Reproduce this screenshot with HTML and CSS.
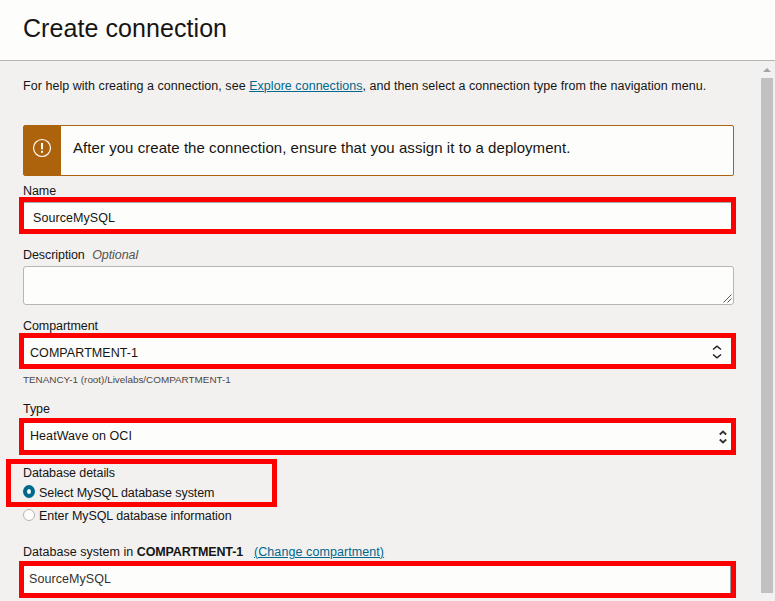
FILE: index.html
```html
<!DOCTYPE html>
<html lang="en">
<head>
<meta charset="utf-8">
<title>Create connection</title>
<link rel="stylesheet" href="styles.css">
</head>
<body>
<div class="panel">
  <header class="header"><h1 class="title"><span>Create connection</span></h1></header>
  <div class="body">
    <main class="form">
      <p class="help">For help with creating a connection, see <a href="#">Explore connections</a>, and then select a connection type from the navigation menu.</p>
      <div class="alert">
        <div class="alert-icon">
          <svg width="20" height="20" viewBox="0 0 20 20"><circle cx="10" cy="10" r="8.5" fill="none" stroke="#fff" stroke-width="1.2"/><path d="M10 5v6.3M10 12.8v2" stroke="#fff" stroke-width="2"/></svg>
        </div>
        <div class="alert-text">After you create the connection, ensure that you assign it to a deployment.</div>
      </div>
      <label class="label label-name">Name</label>
      <div class="field marked field-name"><span>SourceMySQL</span></div>
      <label class="label label-description">Description <em class="optional">Optional</em></label>
      <div class="textarea">
        <svg width="9" height="9" viewBox="0 0 9 9"><path d="M.5 8.5l8-8M4.5 8.5l4-4" fill="none" stroke="#555" stroke-width="1"/></svg>
      </div>
      <label class="label label-compartment">Compartment</label>
      <div class="field marked field-compartment"><span>COMPARTMENT-1</span>
        <svg class="chevrons" width="10" height="14" viewBox="0 0 10 14"><path d="M1 4.5l4-3.3 4 3.3M1 9.5l4 3.3 4-3.3" fill="none" stroke="#222" stroke-width="1.5"/></svg>
      </div>
      <p class="path">TENANCY-1 (root)/Livelabs/COMPARTMENT-1</p>
      <label class="label label-type">Type</label>
      <div class="field marked field-type"><span>HeatWave on OCI</span>
        <svg class="chevrons" width="8" height="14" viewBox="0 0 8 14"><path d="M.8 4.5L4 1.6l3.2 2.9M.8 9.5L4 12.4l3.2-2.9" fill="none" stroke="#333" stroke-width="1.9"/></svg>
      </div>
      <div class="details marked">
        <div class="label label-details">Database details</div>
        <div class="option"><i class="radio radio-on"></i><span class="option-select">Select MySQL database system</span></div>
      </div>
      <div class="option option-off"><i class="radio"></i><span class="option-enter">Enter MySQL database information</span></div>
      <div class="label label-system"><span class="system-in">Database system in <b>COMPARTMENT-1</b></span><a href="#">(Change compartment)</a></div>
      <div class="field marked field-system"><span>SourceMySQL</span></div>
    </main>
    <div class="scrollbar"><div class="arrow"></div><div class="thumb"></div></div>
  </div>
</div>
</body>
</html>
```
FILE: styles.css
```css
* { box-sizing: border-box; }
body { margin: 0; background: #f3f1f0; color: #161513; font: 12.5px/14px "Liberation Sans", Arial, sans-serif; overflow: hidden; }
p, h1 { margin: 0; }
a { color: #00688c; text-decoration: underline; text-underline-offset: 1px; text-decoration-thickness: 1px; }
svg { display: block; flex: none; }
.panel { display: flex; flex-direction: column; height: 601px; }
.header { height: 61px; flex: none; background: #fdfdfb; border-bottom: 1px solid #b9b5b1; padding: 13px 23px; }
.title { font-size: 25px; line-height: 31px; font-weight: 400; letter-spacing: .07px; }
.body { display: flex; flex: 1; min-height: 0; justify-content: space-between; }
.form { width: 736px; padding-left: 19px; display: flex; flex-direction: column; white-space: nowrap; }
.form > * { flex: none; }
.help { margin: 18px 0 32px 4px; height: 14px; letter-spacing: .042px; }
.alert { display: flex; height: 51px; margin: 0 2px 0 4px; background: #fdfdfb; border: 1px solid #ac630c; border-radius: 2px; }
.alert-icon { width: 37px; background: #ac630c; padding: 12px 0 0 8px; }
.alert-text { padding: 13px 0 0 12px; font-size: 15px; line-height: 17px; letter-spacing: .05px; }
.label { display: block; height: 14px; line-height: 16px; margin-left: 4px; letter-spacing: -.07px; }
.label-name { margin-top: 7px; }
.marked { border: 5px solid #f00; }
.field { display: flex; align-items: center; background: #fdfdfb; height: 37px; letter-spacing: .07px; }
.field-name { padding: 5px 0 0 9px; box-shadow: inset 0 1px #aaa; }
.label-description { margin-top: 13px; }
.optional { margin-left: 4px; color: #55514e; }
.textarea { height: 39px; margin: 5px 2px 0 4px; background: #fdfdfb; border: 1px solid #b9b5b1; border-radius: 3px; display: flex; align-items: flex-end; justify-content: flex-end; padding: 1px; }
.label-compartment { margin-top: 13px; }
.field-compartment { height: 36px; margin-top: 1px; padding: 4px 9px 0 6px; }
.field-compartment .chevrons { margin-top: -2px; }
.chevrons { margin-left: auto; }
.path { margin: 4px 0 0 4px; height: 14px; font-size: 9.9px; color: #4a4643; }
.label-type { margin-top: 14px; }
.field-type { margin-top: 3px; padding: 0 4px 2px 6px; }
.field-type .chevrons { margin-top: 2px; }
.details { width: 271px; height: 48px; margin: 4px 0 0 -13px; padding: 1px 0 0 12px; }
.label-details { margin-left: 0; }
.option { display: flex; align-items: flex-start; height: 14px; line-height: 16px; margin-top: 6px; letter-spacing: -.07px; }
.radio { width: 12px; height: 12px; border: 1px solid #b9b5b1; border-radius: 50%; background: #fdfdfb; margin-right: 4px; flex: none; }
.radio-on { height: 13px; border: 4px solid #00688c; }
.option-off { margin: 2px 0 0 4px; line-height: 14px; }
.label-system { display: flex; margin-top: 21px; letter-spacing: .03px; }
.label-system b { letter-spacing: -.15px; }
.label-system a { letter-spacing: .08px; }
.system-in { margin-right: 11px; }
.field-system { margin-top: 3px; padding: 0 0 2px 5px; color: #333; box-shadow: inset -1px 0 #999; }
.scrollbar { width: 16px; background: #f1f1f1; display: flex; flex-direction: column; align-items: center; padding-top: 7px; }
.arrow { border: 4px solid transparent; border-top-width: 0; border-bottom: 4px solid #a3a3a3; }
.thumb { width: 12px; height: 515px; margin-top: 6px; background: #c1c1c1; }
```
